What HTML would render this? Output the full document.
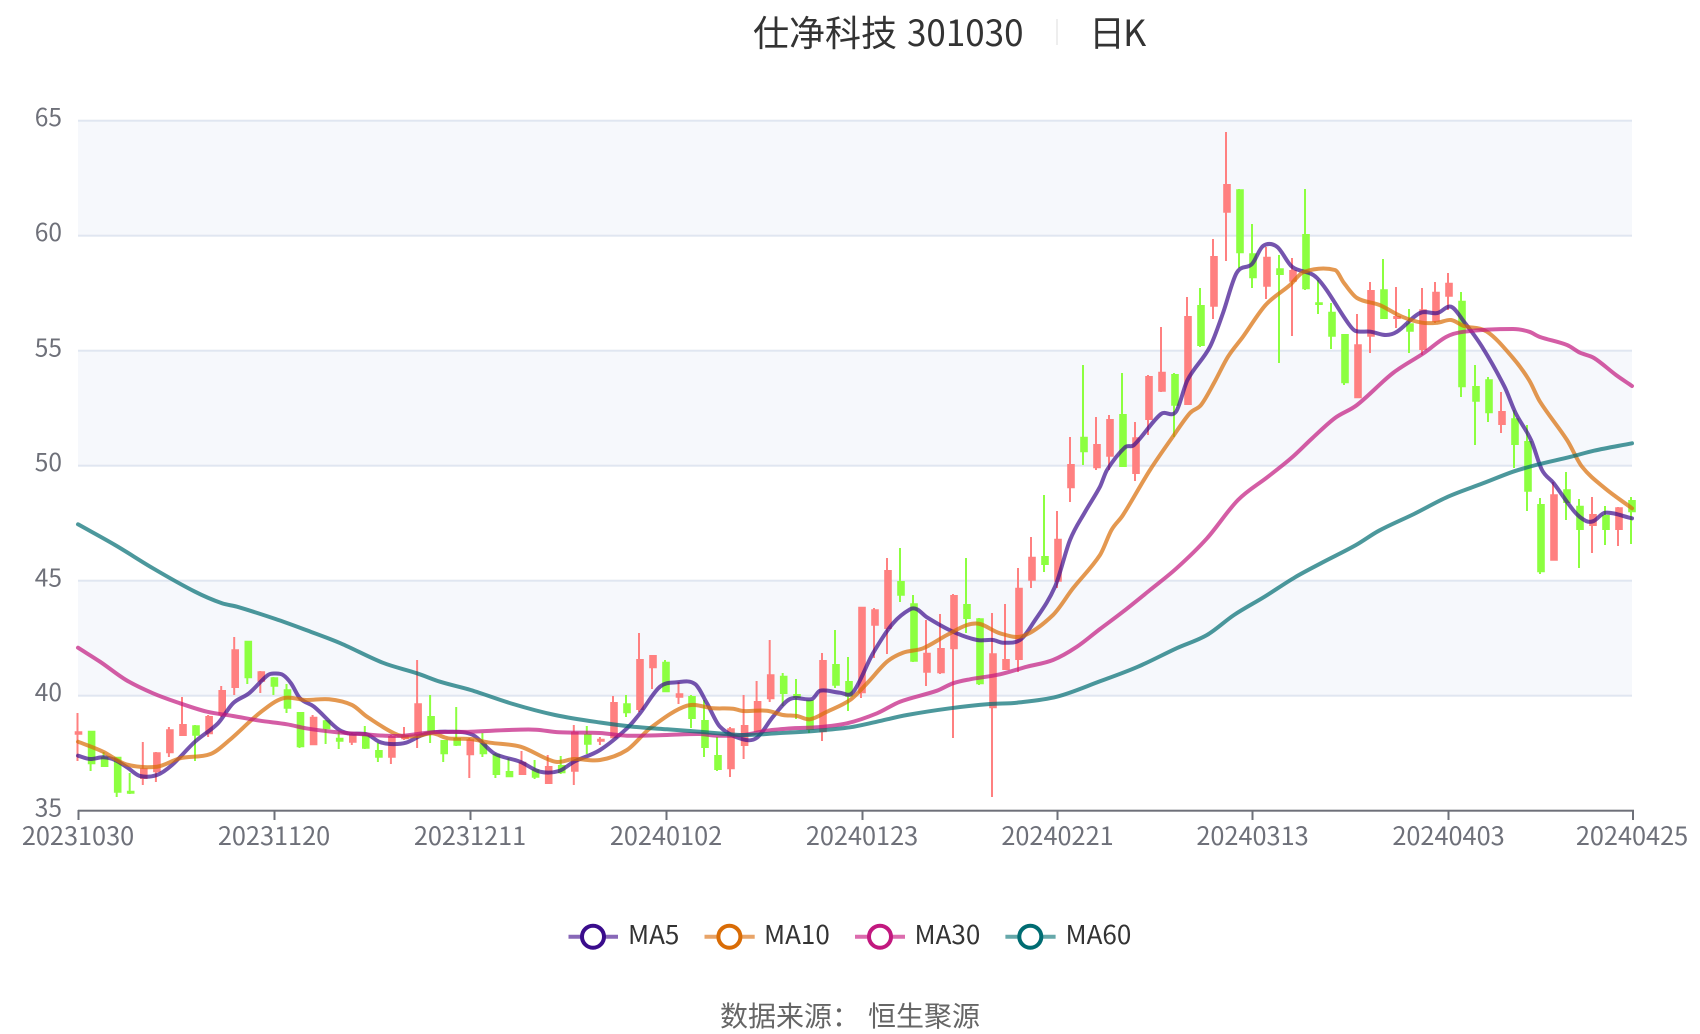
<!DOCTYPE html>
<html lang="zh">
<head>
<meta charset="utf-8">
<title>仕净科技 301030 日K</title>
<style>
html,body{margin:0;padding:0;background:#fff;width:1700px;height:1034px;overflow:hidden}
svg{display:block}
text{font-family:"Noto Sans CJK SC","Liberation Sans",sans-serif}
.ax{font-size:24.5px;fill:#6e7079}
.ma{fill:none;stroke-width:4;stroke-linejoin:round;stroke-linecap:round;opacity:.7}
.lg{font-size:26px;fill:#333}
</style>
</head>
<body>
<svg width="1700" height="1034" viewBox="0 0 1700 1034" xmlns="http://www.w3.org/2000/svg">
<rect width="1700" height="1034" fill="#fff"/>
<text x="753" y="46" font-size="36" fill="#333">仕净科技</text>
<text x="907" y="46" font-size="36" fill="#333" textLength="116.5" lengthAdjust="spacingAndGlyphs">301030</text>
<rect x="1056" y="19" width="2" height="26" fill="#eee"/>
<text x="1089" y="46" font-size="36" fill="#333">日<tspan dx="-2">K</tspan></text>

<rect x="78" y="120.7" width="1554" height="115" fill="#f6f8fc"/>
<rect x="78" y="350.7" width="1554" height="115" fill="#f6f8fc"/>
<rect x="78" y="580.7" width="1554" height="115" fill="#f6f8fc"/>
<g fill="#e0e6f1">
<rect x="78" y="119.7" width="1554" height="2"/>
<rect x="78" y="234.7" width="1554" height="2"/>
<rect x="78" y="349.7" width="1554" height="2"/>
<rect x="78" y="464.7" width="1554" height="2"/>
<rect x="78" y="579.7" width="1554" height="2"/>
<rect x="78" y="694.7" width="1554" height="2"/>
</g>

<g class="ax" text-anchor="end">
<text x="62" y="126">65</text>
<text x="62" y="241">60</text>
<text x="62" y="356.5">55</text>
<text x="62" y="471">50</text>
<text x="62" y="586.5">45</text>
<text x="62" y="701">40</text>
<text x="62" y="816.5">35</text>
</g>

<path fill="#ff8080" d="M76.5 713h2V761h-2zM74.7 731.3h7.6V734.7h-7.6zM141.8 742h2V785h-2zM140 768.3h7.6V779h-7.6zM154.9 752h2V782h-2zM153.1 752.3h7.6V772.3h-7.6zM167.9 727h2V757h-2zM166.1 729.3h7.6V753.3h-7.6zM181 697h2V736h-2zM179.2 724h7.6V736h-7.6zM207.1 715h2V737h-2zM205.3 716h7.6V734.3h-7.6zM220.2 686h2V717h-2zM218.4 690h7.6V715.3h-7.6zM233.2 637h2V695h-2zM231.4 649.3h7.6V688h-7.6zM259.3 671h2V693h-2zM257.5 671.3h7.6V681.7h-7.6zM311.6 715h2V745h-2zM309.8 716.7h7.6V745.3h-7.6zM350.8 733h2V745h-2zM349 734h7.6V742.7h-7.6zM389.9 735h2V764h-2zM388.1 736h7.6V757.7h-7.6zM403 727h2V740h-2zM401.2 735h7.6V739.3h-7.6zM416.1 660h2V748h-2zM414.3 703.3h7.6V735h-7.6zM468.3 738h2V778h-2zM466.5 739.3h7.6V755.3h-7.6zM520.5 751h2V775h-2zM518.7 761.7h7.6V775h-7.6zM546.7 755h2V784h-2zM544.9 766h7.6V784h-7.6zM572.8 725h2V785h-2zM571 731.7h7.6V771.7h-7.6zM598.9 737h2V745h-2zM597.1 738.7h7.6V741.7h-7.6zM612 696h2V738h-2zM610.2 702h7.6V738.3h-7.6zM638 633h2V712h-2zM636.2 659h7.6V710h-7.6zM651 655h2V689h-2zM649.2 655h7.6V668.3h-7.6zM677.5 682h2V704h-2zM675.7 693.3h7.6V697.7h-7.6zM729 727h2V777h-2zM727.2 728.3h7.6V769.3h-7.6zM742.6 695h2V759h-2zM740.8 725h7.6V746h-7.6zM755.6 681h2V732h-2zM753.8 701h7.6V731.7h-7.6zM768.7 640h2V702h-2zM766.9 674.3h7.6V699.3h-7.6zM821 653h2V741h-2zM819.2 660h7.6V732.3h-7.6zM860 607h2V698h-2zM858.2 606.7h7.6V693.3h-7.6zM873 608h2V658h-2zM871.2 609.3h7.6V625.7h-7.6zM886 558h2V654h-2zM884.2 570h7.6V629h-7.6zM925 620h2V686h-2zM923.2 652.7h7.6V672.7h-7.6zM939 614h2V674h-2zM937.2 648h7.6V673.3h-7.6zM952 594h2V738h-2zM950.2 595h7.6V649.3h-7.6zM991 613h2V797h-2zM989.2 653.3h7.6V708.3h-7.6zM1004 604h2V670h-2zM1002.2 659h7.6V670h-7.6zM1017 568h2V672h-2zM1015.2 587.7h7.6V660h-7.6zM1030 537h2V588h-2zM1028.2 556.7h7.6V580.7h-7.6zM1056 511h2V588h-2zM1054.2 538.7h7.6V581.7h-7.6zM1069 437h2V502h-2zM1067.2 464h7.6V488.3h-7.6zM1095 417h2V470h-2zM1093.2 444h7.6V468.3h-7.6zM1108 415h2V470h-2zM1106.2 419h7.6V456.7h-7.6zM1134 422h2V481h-2zM1132.2 437.3h7.6V474h-7.6zM1147 375h2V435h-2zM1145.2 376h7.6V420h-7.6zM1160 327h2V392h-2zM1158.2 371.7h7.6V391.7h-7.6zM1186 297h2V405h-2zM1184.2 316h7.6V405h-7.6zM1212 239h2V319h-2zM1210.2 256h7.6V306.7h-7.6zM1225 132h2V261h-2zM1223.2 184h7.6V212.7h-7.6zM1265 247h2V299h-2zM1263.2 256.7h7.6V286.7h-7.6zM1291 258h2V336h-2zM1289.2 270h7.6V281.7h-7.6zM1356 314h2V398h-2zM1354.2 344.3h7.6V398.3h-7.6zM1369 282h2V353h-2zM1367.2 290h7.6V336.7h-7.6zM1395 287h2V328h-2zM1393.2 316h7.6V319h-7.6zM1421 288h2V355h-2zM1419.2 309.3h7.6V350h-7.6zM1434 282h2V323h-2zM1432.2 291.7h7.6V321.7h-7.6zM1447 273h2V310h-2zM1445.2 282.7h7.6V296.7h-7.6zM1500 392h2V433h-2zM1498.2 411h7.6V425h-7.6zM1552 482h2V560h-2zM1550.2 494.3h7.6V560.7h-7.6zM1591 497h2V553h-2zM1589.2 514h7.6V526h-7.6zM1617 507h2V546h-2zM1615.2 507.3h7.6V530h-7.6z"/>

<path fill="#8cff40" d="M89.6 731h2V771h-2zM87.8 730.7h7.6V764.3h-7.6zM102.6 752h2V767h-2zM100.8 756.7h7.6V767h-7.6zM115.7 757h2V797h-2zM113.9 756.7h7.6V792.7h-7.6zM128.7 773h2V794h-2zM126.9 790.7h7.6V793.7h-7.6zM194 725h2V761h-2zM192.2 725.3h7.6V735.7h-7.6zM246.3 641h2V684h-2zM244.5 640.7h7.6V678.3h-7.6zM272.4 677h2V695h-2zM270.6 677.3h7.6V686.7h-7.6zM285.5 684h2V713h-2zM283.7 689.3h7.6V708.7h-7.6zM298.5 712h2V748h-2zM296.7 712h7.6V747.3h-7.6zM324.6 720h2V744h-2zM322.8 720.3h7.6V729.3h-7.6zM337.7 732h2V749h-2zM335.9 737.7h7.6V741.7h-7.6zM363.8 726h2V749h-2zM362 735h7.6V748.7h-7.6zM376.9 743h2V762h-2zM375.1 750h7.6V757.7h-7.6zM429.1 695h2V743h-2zM427.3 716h7.6V733.3h-7.6zM442.2 740h2V762h-2zM440.4 740h7.6V754.3h-7.6zM455.2 707h2V746h-2zM453.4 738h7.6V745.7h-7.6zM481.4 733h2V757h-2zM479.6 743.3h7.6V754.3h-7.6zM494.4 753h2V778h-2zM492.6 754h7.6V775h-7.6zM507.5 758h2V777h-2zM505.7 771h7.6V777.3h-7.6zM533.6 760h2V779h-2zM531.8 769.3h7.6V777.7h-7.6zM559.7 756h2V774h-2zM557.9 765h7.6V773.3h-7.6zM585.8 726h2V754h-2zM584 734h7.6V744.7h-7.6zM625 695h2V717h-2zM623.2 703.3h7.6V713.3h-7.6zM664 660h2V692h-2zM662.2 661.7h7.6V692.3h-7.6zM690 695h2V728h-2zM688.2 696h7.6V719h-7.6zM703 700h2V757h-2zM701.2 720h7.6V748h-7.6zM716 737h2V771h-2zM714.2 755h7.6V770h-7.6zM781.7 673h2V706h-2zM779.9 675.7h7.6V694h-7.6zM795 679h2V719h-2zM793.2 694h7.6V698h-7.6zM808 700h2V733h-2zM806.2 700h7.6V730h-7.6zM834 630h2V688h-2zM832.2 664h7.6V685.7h-7.6zM847 657h2V711h-2zM845.2 681h7.6V696.7h-7.6zM899 548h2V602h-2zM897.2 581h7.6V595.7h-7.6zM912 595h2V662h-2zM910.2 603.3h7.6V661.7h-7.6zM965 558h2V633h-2zM963.2 604h7.6V619h-7.6zM978 618h2V685h-2zM976.2 618.3h7.6V684.3h-7.6zM1043 495h2V572h-2zM1041.2 556h7.6V565h-7.6zM1082 365h2V465h-2zM1080.2 436.7h7.6V452.3h-7.6zM1121 373h2V467h-2zM1119.2 414h7.6V467h-7.6zM1173 373h2V437h-2zM1171.2 374h7.6V405.7h-7.6zM1199 288h2V347h-2zM1197.2 305h7.6V346h-7.6zM1238 189h2V268h-2zM1236.2 189.3h7.6V253.3h-7.6zM1251 224h2V288h-2zM1249.2 253.3h7.6V278.3h-7.6zM1278 255h2V363h-2zM1276.2 268.3h7.6V275h-7.6zM1304 189h2V290h-2zM1302.2 234h7.6V289.3h-7.6zM1317 280h2V314h-2zM1315.2 302.3h7.6V305h-7.6zM1330 303h2V349h-2zM1328.2 311.7h7.6V336.7h-7.6zM1343 334h2V385h-2zM1341.2 334h7.6V383.3h-7.6zM1382 259h2V319h-2zM1380.2 289.3h7.6V319h-7.6zM1408 309h2V353h-2zM1406.2 323.3h7.6V331.7h-7.6zM1460 292h2V397h-2zM1458.2 300.7h7.6V387.3h-7.6zM1474 365h2V445h-2zM1472.2 386h7.6V401.7h-7.6zM1487 377h2V422h-2zM1485.2 379.3h7.6V413.3h-7.6zM1513 410h2V468h-2zM1511.2 418.3h7.6V445h-7.6zM1526 425h2V511h-2zM1524.2 441h7.6V491.7h-7.6zM1539 498h2V574h-2zM1537.2 504h7.6V572.3h-7.6zM1565 472h2V520h-2zM1563.2 489.3h7.6V503h-7.6zM1578 499h2V568h-2zM1576.2 505.7h7.6V530h-7.6zM1604 506h2V545h-2zM1602.2 515h7.6V530h-7.6zM1630 497h2V544h-2zM1628.2 500h7.6V512.3h-7.6z"/>

<polyline class="ma" stroke="#3a0c8c" points="78,755.7 90,759 103,757.3 115,760 128,768 140,776 157,775 172,765 195,741.7 218,723.3 233,703.3 249,693.3 268,675 276,673.5 283,675 291,683.3 300,698.3 314,706.7 337,728.3 348,733.3 367,734.3 379,741.7 390,744 406,742.7 425,734 448,731.7 473,735 494,753.3 520,761.7 540,771.7 559,771 574,761.7 600,750 627,728.3 640,713.3 660,686.7 677,682.3 695,684 707,703.3 720,726.7 743,739.3 757,737.7 773,716.7 790,699 812,699 820,690.7 840,692.7 853,692.3 873,653.3 893,623.3 910,609.3 917,609.3 927,617.3 953,631.7 977,640 993,640 1003,642.7 1020,640 1033,623.3 1055,586.7 1070,540 1085,512 1100,486.7 1107,470 1125,447.3 1134,445 1161,414 1176,411.7 1187.5,380 1210,346.7 1223,313 1236.6,273 1252,264 1263,246 1277,246.7 1292,266.7 1317,278 1348,323 1355,330.7 1370.5,331.7 1386,335 1397,331.7 1420,313 1437.5,313 1451,306.7 1464,321.7 1482,346.7 1504.5,386.7 1515.6,413 1531,440 1542,470 1553.5,483 1574.5,511.7 1586,521 1593.7,521 1605,512.7 1632,518.3"/>

<polyline class="ma" stroke="#d96c06" points="78,741.7 103,751.7 126,764.3 157,766.7 180,758.3 210.5,754 229.6,740 260,712.7 283,698.3 306,700 329,699.3 352,705 367,716.7 398,735 417,736 432.5,733.3 448,738.3 470.7,739 490,742.7 520.5,746.7 555,761.7 574,759 600,760 627,750 650,728.3 687,705.7 713,708.3 733,708.7 743,711 767,710.7 783,715 797,716 810,719.3 827,711.7 850,700 867,683.3 887,661.7 903,652.7 923,648.3 947,635 967,625 980,624 1000,633.3 1023,636 1053,615 1073,588.3 1100,555 1111.5,530 1123,515 1150,470 1174,435 1190,413 1201,405 1214,383 1228,356.7 1243,336.7 1265.6,305 1290,285 1303.6,272 1335,270 1344,283 1357,298 1379.5,305 1402,316.7 1422,322.7 1437.5,322.7 1451,320 1464,326 1487,331.7 1513,358 1529,380 1540,401.7 1567,440 1582,466.7 1605,488.3 1632,508.3"/>

<polyline class="ma" stroke="#c2187f" points="78,647.7 100,661.7 126,680 153,693.3 180,703.3 207,711.7 233,716 260,720.7 287,724.3 306,728.3 337,732.3 363.6,734.3 398,736 432.5,732.3 470.7,731.7 509,730 536,729.7 559,732.3 600,733 627,735.7 667,735 700,734 717,735.7 743,735 767,730.7 793,728.3 817,727.3 847,723.3 877,713.3 900,701.7 937,690.7 953,683.3 970,679.3 1000,674.3 1027,666.7 1053,660 1077,646.7 1100,629 1123,611.7 1150,590 1176.5,568.3 1207,538.3 1238,500 1268,476.7 1291,458.3 1312.5,438 1335,418 1357,405 1393,373 1424,353 1446,337 1464,331.7 1513,329 1529,331.7 1540,337 1567,345 1580,352.7 1594,358 1616,375 1632,386"/>

<polyline class="ma" stroke="#006c72" points="78,524.3 115,545 153,568.3 195,591.7 222,603.3 237,606.7 275.5,619 306,630 340.6,643.3 382.7,662.7 417,673.3 440,681.7 470.7,690 513,704 555,715 600,722.5 633,726.7 667,729.3 700,731.7 743,735 777,733.3 817,730.7 850,727.3 877,721.7 907,715 950,708.3 990,704 1017,702.7 1057,696.7 1100,681.3 1138,666.7 1176.5,648.3 1207,635 1234,615 1264.6,596.7 1295,577.3 1322,562.7 1356,545 1379,530.7 1414,514 1448,496.7 1483,483.3 1513,471.7 1536,465 1571,456.7 1594,450.7 1632,443.3"/>

<rect x="78" y="809.7" width="1556" height="2" fill="#6e7079"/>
<g fill="#6e7079">
<rect x="77.5" y="810" width="2" height="10"/>
<rect x="273.5" y="810" width="2" height="10"/>
<rect x="469.5" y="810" width="2" height="10"/>
<rect x="665.5" y="810" width="2" height="10"/>
<rect x="861.5" y="810" width="2" height="10"/>
<rect x="1056.5" y="810" width="2" height="10"/>
<rect x="1251.5" y="810" width="2" height="10"/>
<rect x="1447.5" y="810" width="2" height="10"/>
<rect x="1632" y="810" width="2" height="10"/>
</g>
<g class="ax" text-anchor="middle" style="font-size:25.3px">
<text x="78" y="845">20231030</text>
<text x="274" y="845">20231120</text>
<text x="470" y="845">20231211</text>
<text x="666" y="845">20240102</text>
<text x="862" y="845">20240123</text>
<text x="1057.5" y="845">20240221</text>
<text x="1252.5" y="845">20240313</text>
<text x="1448.5" y="845">20240403</text>
<text x="1632" y="845">20240425</text>
</g>

<g stroke-width="4">
<line x1="568.5" y1="936.7" x2="618" y2="936.7" stroke="#8868b8"/>
<circle cx="593" cy="936.7" r="11" fill="#fff" stroke="#3a0c8c"/>
<line x1="704.5" y1="936.7" x2="754.7" y2="936.7" stroke="#e8a468"/>
<circle cx="729.4" cy="936.7" r="11" fill="#fff" stroke="#d96c06"/>
<line x1="855" y1="936.7" x2="905" y2="936.7" stroke="#dc6cae"/>
<circle cx="880" cy="936.7" r="11" fill="#fff" stroke="#c2187f"/>
<line x1="1005.4" y1="936.7" x2="1055.6" y2="936.7" stroke="#66a8aa"/>
<circle cx="1030.3" cy="936.7" r="11" fill="#fff" stroke="#006c72"/>
</g>
<g class="lg">
<text x="628" y="944">MA5</text>
<text x="764" y="944">MA10</text>
<text x="914.5" y="944">MA30</text>
<text x="1065.5" y="944">MA60</text>
</g>
<text x="720" y="1026" font-size="28" fill="#666">数据来源：</text>
<text x="868" y="1026" font-size="28" fill="#666">恒生聚源</text>
</svg>
<script>
document.querySelectorAll('polyline.ma').forEach(function(el){
  var p=el.getAttribute('points').trim().split(/\s+/).map(function(s){return s.split(',').map(Number)});
  var d='M'+p[0][0]+' '+p[0][1];
  for(var i=0;i<p.length-1;i++){
    var a=p[i-1]||p[i],b=p[i],c=p[i+1],e=p[i+2]||c;
    var h=(c[0]-b[0]);
    var m1=(c[1]-a[1])/((c[0]-a[0])||1),m2=(e[1]-b[1])/((e[0]-b[0])||1);
    d+='C'+(b[0]+h/3).toFixed(1)+' '+(b[1]+m1*h/3).toFixed(1)+' '+(c[0]-h/3).toFixed(1)+' '+(c[1]-m2*h/3).toFixed(1)+' '+c[0]+' '+c[1];
  }
  var n=document.createElementNS('http://www.w3.org/2000/svg','path');
  n.setAttribute('class','ma');
  n.setAttribute('stroke',el.getAttribute('stroke'));
  n.setAttribute('d',d);
  el.parentNode.replaceChild(n,el);
});
</script>
</body>
</html>
